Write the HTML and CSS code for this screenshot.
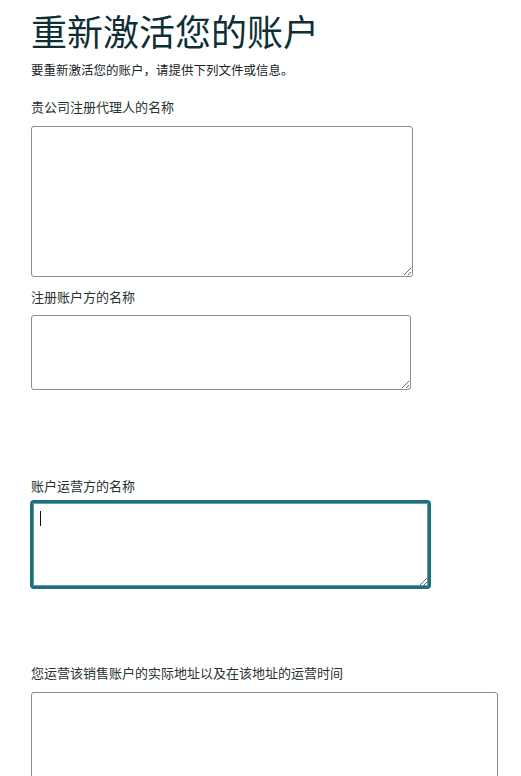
FILE: index.html
```html
<!DOCTYPE html>
<html lang="zh-CN">
<head>
<meta charset="utf-8">
<title>重新激活您的账户</title>
<link rel="stylesheet" href="styles.css">
</head>
<body>
<main class="page">
  <h1 class="title">重新激活您的账户</h1>
  <p class="intro">要重新激活您的账户，请提供下列文件或信息。</p>

  <div class="field field-1">
    <label class="label" for="agent">贵公司注册代理人的名称</label>
    <textarea id="agent" class="box box-1"></textarea>
  </div>

  <div class="field field-2">
    <label class="label" for="owner">注册账户方的名称</label>
    <textarea id="owner" class="box box-2"></textarea>
  </div>

  <div class="field field-3">
    <label class="label" for="operator">账户运营方的名称</label>
    <div class="box-wrap">
      <textarea id="operator" class="box box-3 is-focused"></textarea>
      <span class="caret"></span>
    </div>
  </div>

  <div class="field field-4">
    <label class="label" for="address">您运营该销售账户的实际地址以及在该地址的运营时间</label>
    <textarea id="address" class="box box-4"></textarea>
  </div>
</main>
</body>
</html>
```

FILE: styles.css
```css
html, body {
  margin: 0;
  padding: 0;
  background: #ffffff;
}

body {
  font-family: "Noto Sans CJK SC", "Noto Sans", "Liberation Sans", sans-serif;
  color: #0f1111;
  overflow: hidden;
}

.page {
  padding: 0 0 0 31px;
}

.title {
  margin: 8px 0 0;
  font-size: 36px;
  line-height: 44px;
  font-weight: 400;
  color: #0f2f36;
}

.intro {
  margin: 8px 0 0;
  font-size: 12.5px;
  line-height: 20px;
  color: #1a2426;
}

.field {
  display: flex;
  flex-direction: column;
  align-items: flex-start;
}

.label {
  font-size: 13px;
  line-height: 20px;
  color: #26332f;
}

.box {
  display: block;
  box-sizing: border-box;
  margin: 0;
  padding: 6px 8px;
  border: 1px solid #888c8c;
  border-radius: 3px;
  background: #ffffff;
  font: inherit;
  outline: none;
}

.field-1 { margin-top: 17px; }
.box-1 { width: 382px; height: 151px; margin-top: 9px; }

.field-2 { margin-top: 10px; }
.box-2 { width: 380px; height: 75px; margin-top: 8px; }

.field-3 { margin-top: 86px; }
.box-wrap { position: relative; margin-top: 4px; margin-left: -1px; }
.box-3 { width: 401px; height: 89px; }
.box-3.is-focused {
  border: 3px solid #1d6f7b;
  box-shadow: inset 0 0 0 1px #5d9ea8;
  border-radius: 4px;
}
.caret {
  position: absolute;
  left: 10px;
  top: 11px;
  width: 1px;
  height: 15px;
  background: #0f1111;
}

.field-4 { margin-top: 74px; }
.box-4 { width: 467px; height: 150px; margin-top: 9px; }
```
